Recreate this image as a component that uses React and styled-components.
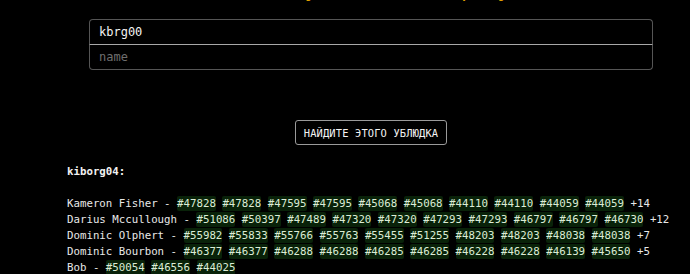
import React from "react";
import styled, { createGlobalStyle } from "styled-components";

const Global = createGlobalStyle`
  html, body { margin: 0; padding: 0; background: #000; }
  body { font-family: "DejaVu Sans Mono", "Liberation Mono", monospace; color: #e6e6e6; overflow: hidden; }
`;

const Page = styled.div`
  padding: 0 0 0 67px;
  height: 274px;
  overflow: hidden;
`;

const Title = styled.h1`
  margin: -20px 37px 0 22px;
  height: 20px;
  font-size: 20px;
  line-height: 20px;
  font-weight: normal;
  color: #e0a000;
  text-align: center;
`;

const Form = styled.div`
  margin: 19px 37px 0 22px;
  display: flex;
  flex-direction: column;
  align-items: stretch;
`;

const Input = styled.input`
  box-sizing: border-box;
  height: 26px;
  margin-top: ${(p) => (p.$first ? "0" : "-1px")};
  padding: 0 9px;
  background: #000;
  color: #f2f2f2;
  font-family: "DejaVu Sans Mono", monospace;
  font-size: 12px;
  border: 1px solid #555;
  border-bottom-color: ${(p) => (p.$first ? "#a8a8a8" : "#555")};
  border-top-color: ${(p) => (p.$first ? "#555" : "#a8a8a8")};
  border-radius: ${(p) => (p.$first ? "4px 4px 0 0" : "0 0 4px 4px")};
  outline: none;
  &::placeholder { color: #6e6e6e; }
`;

const ButtonRow = styled.div`
  display: flex;
  justify-content: center;
  margin: 50px 37px 0 22px;
`;

const Button = styled.button`
  box-sizing: border-box;
  height: 25px;
  padding: 0 8px;
  background: #000;
  color: #f4f4f4;
  border: 1px solid #9a9a9a;
  border-radius: 3px;
  font-family: "DejaVu Sans Mono", monospace;
  font-size: 10.4px;
  letter-spacing: 0.15px;
`;

const Results = styled.div`
  margin-top: 19px;
  font-size: 10.75px;
  line-height: 16px;
  white-space: pre;
  color: #e8e8e8;
`;

const Owner = styled.div`
  font-weight: bold;
  margin-bottom: 16px;
  color: #f2f2f2;
`;

const Row = styled.div``;

const Tag = styled.span`
  background: #092209;
  color: #dcecd6;
  padding: 1px 0;
  border-radius: 2px;
`;

const rows = [
  ["Kameron Fisher", ["47828", "47828", "47595", "47595", "45068", "45068", "44110", "44110", "44059", "44059"], "+14"],
  ["Darius Mccullough", ["51086", "50397", "47489", "47320", "47320", "47293", "47293", "46797", "46797", "46730"], "+12"],
  ["Dominic Olphert", ["55982", "55833", "55766", "55763", "55455", "51255", "48203", "48203", "48038", "48038"], "+7"],
  ["Dominic Bourbon", ["46377", "46377", "46288", "46288", "46285", "46285", "46228", "46228", "46139", "45650"], "+5"],
  ["Bob", ["50054", "46556", "44025"], ""],
];

export default function App() {
  return (
    <Page>
      <Global />
      <Title>Найти ублюдка по игроку</Title>
      <Form>
        <Input $first defaultValue="kbrg00" />
        <Input placeholder="name" />
      </Form>
      <ButtonRow>
        <Button>НАЙДИТЕ ЭТОГО УБЛЮДКА</Button>
      </ButtonRow>
      <Results>
        <Owner>kiborg04:</Owner>
        {rows.map(([name, ids, more]) => (
          <Row key={name}>
            {name + " - "}
            {ids.map((id, i) => (
              <React.Fragment key={i}>
                <Tag>#{id}</Tag>
                {" "}
              </React.Fragment>
            ))}
            {more}
          </Row>
        ))}
      </Results>
    </Page>
  );
}
